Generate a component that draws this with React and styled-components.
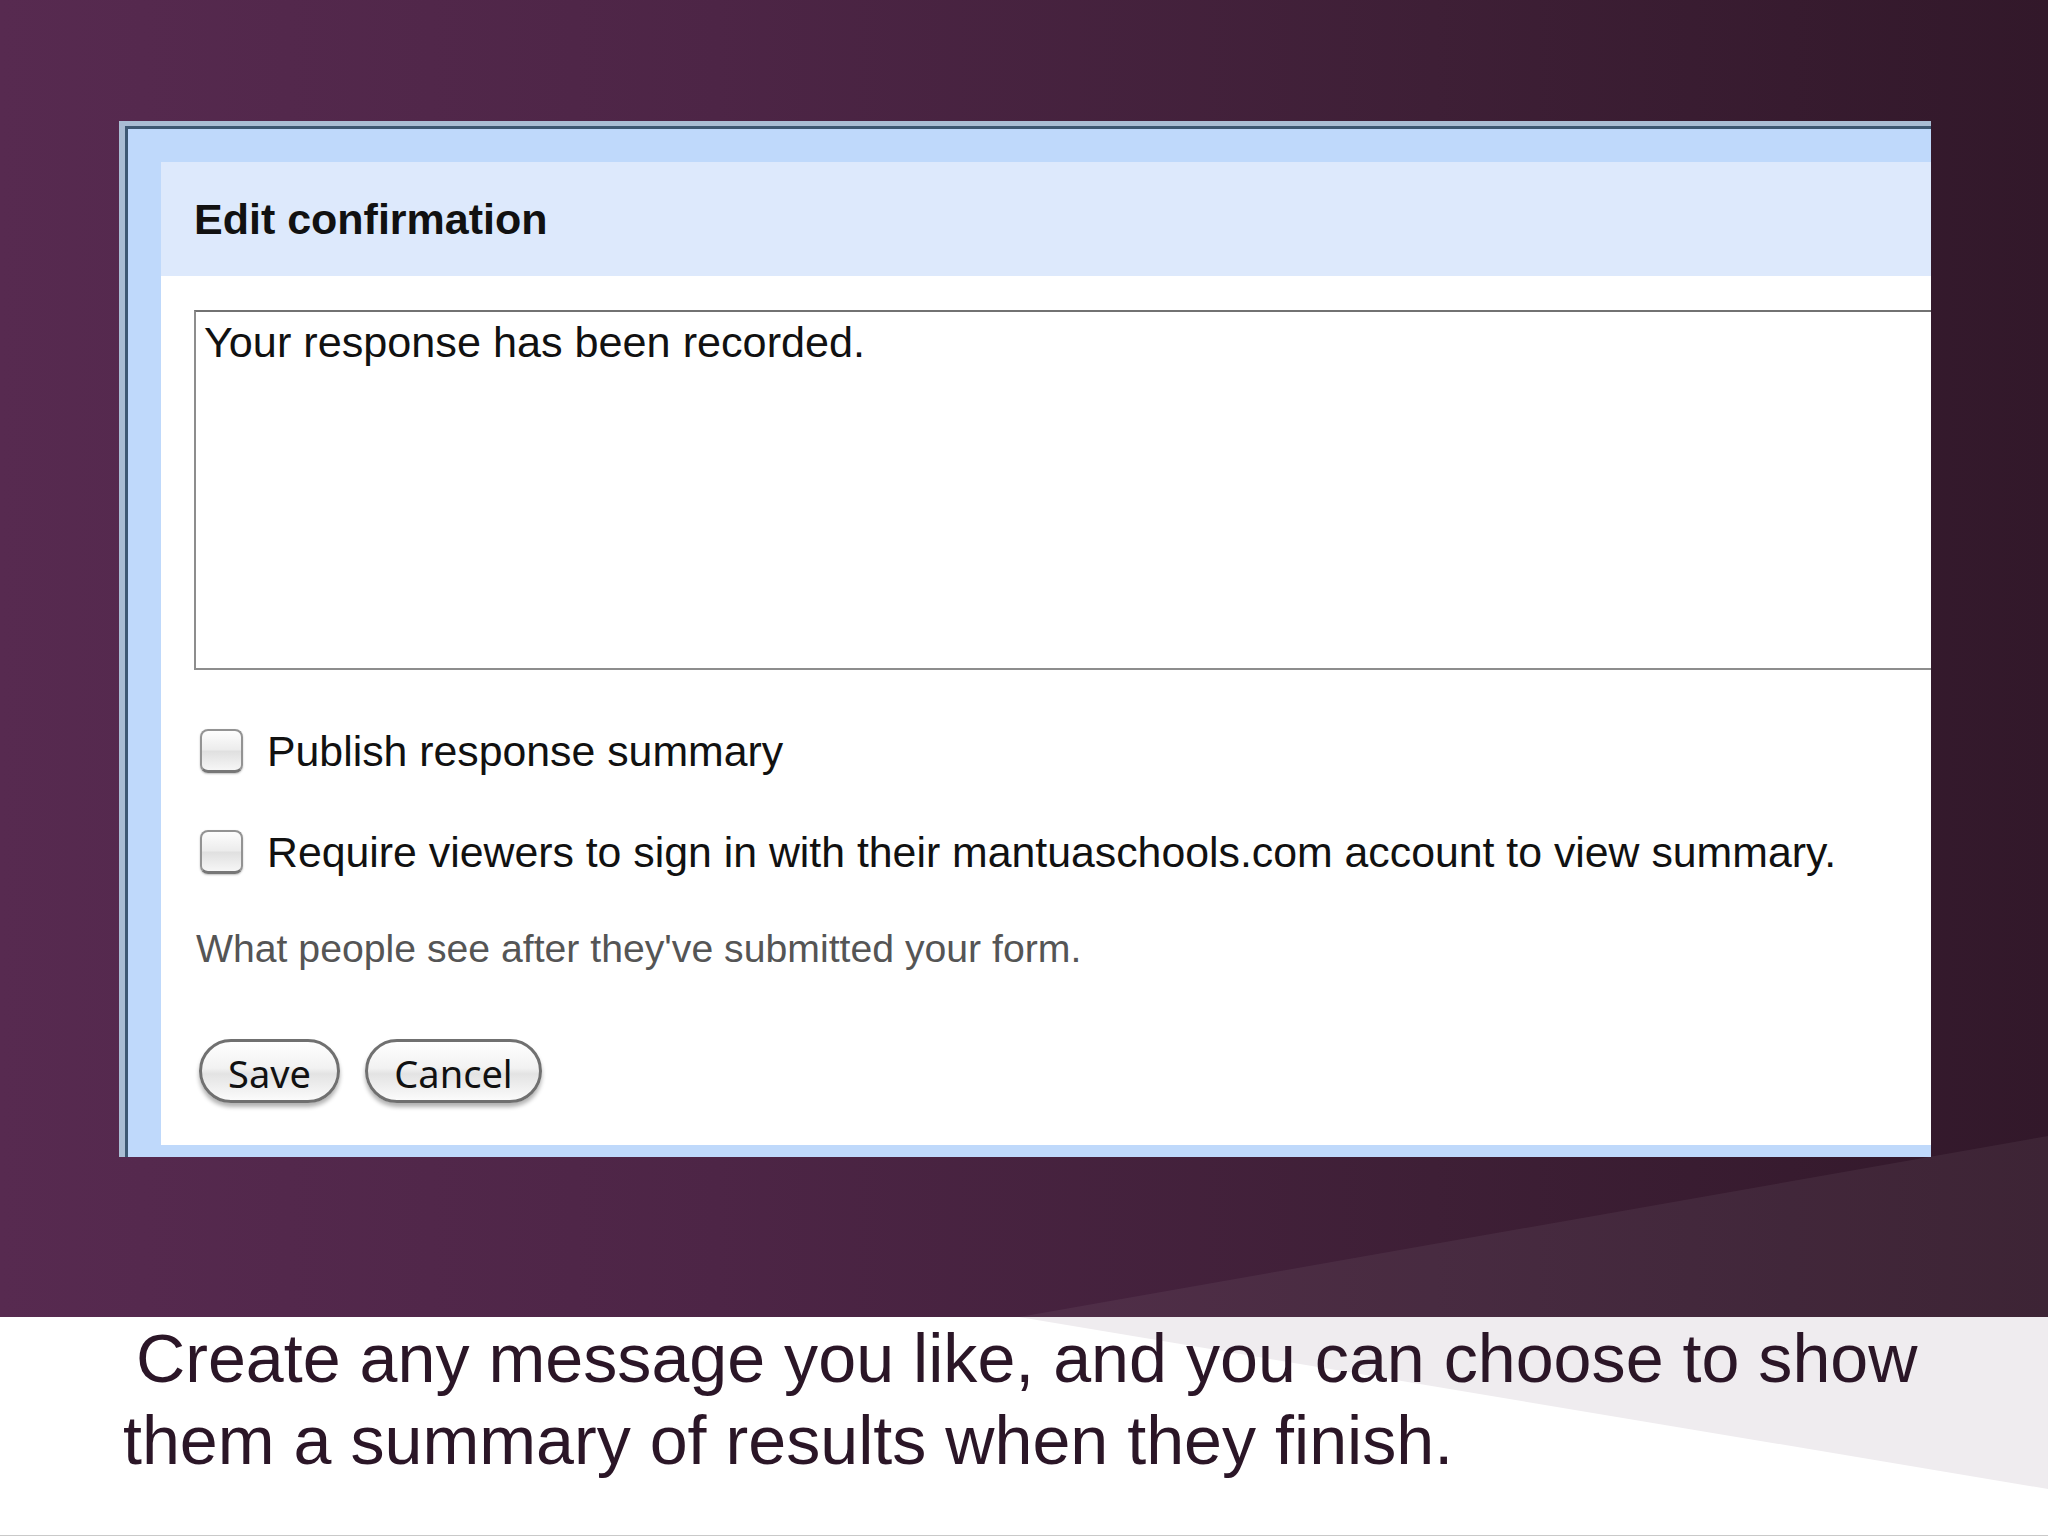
import React from "react";
import styled, { createGlobalStyle } from "styled-components";

const GlobalStyle = createGlobalStyle`
  html, body {
    margin: 0;
    padding: 0;
  }
  body {
    width: 2048px;
    height: 1536px;
    overflow: hidden;
    font-family: "Liberation Sans", Arial, sans-serif;
  }
`;

const Slide = styled.div`
  width: 2048px;
  height: 1536px;
  display: flex;
  flex-direction: column;
  overflow: hidden;
`;

const Stage = styled.section`
  position: relative;
  height: 1317px;
  flex-shrink: 0;
  box-sizing: border-box;
  padding: 121px 0 0 119px;
  background: linear-gradient(
    90deg,
    #572a50 0%,
    #4d2546 35%,
    #3e1f36 70%,
    #32182a 100%
  );

  /* lighter wedge bottom right */
  &::after {
    content: "";
    position: absolute;
    inset: 0;
    background: rgba(255, 255, 255, 0.055);
    clip-path: polygon(1019px 1317px, 2048px 1136px, 2048px 1317px);
  }
`;

const Dialog = styled.div`
  position: relative;
  z-index: 1;
  width: 1812px;
  height: 1036px;
  box-sizing: border-box;
  display: flex;
  border-top: 5px solid #a9bdd3;
  border-left: 6px solid #a9bdd3;
`;

const DialogFrame = styled.div`
  flex: 1;
  display: flex;
  flex-direction: column;
  border-top: 3px solid #3d5872;
  border-left: 3px solid #3d5872;
  background: #bfd9fb;
  padding: 33px 0 12px 33px;
`;

const Panel = styled.div`
  flex: 1;
  display: flex;
  flex-direction: column;
  background: #fff;
  overflow: hidden;
`;

const PanelHeader = styled.div`
  height: 114px;
  flex-shrink: 0;
  display: flex;
  align-items: center;
  padding-left: 33px;
  background: #dde9fc;
  color: #111;
  font-size: 43px;
  font-weight: 700;
`;

const PanelBody = styled.div`
  display: flex;
  flex-direction: column;
  padding: 34px 0 0 33px;
`;

const MessageBox = styled.div`
  height: 360px;
  box-sizing: border-box;
  border: 2px solid #8d8d8d;
  border-top-color: #727272;
  border-right: none;
  padding: 6px 0 0 8px;
  color: #111;
  font-size: 43.2px;
`;

const Options = styled.div`
  display: flex;
  flex-direction: column;
  gap: 57px;
  margin-top: 59px;
`;

const OptionRow = styled.label`
  display: flex;
  align-items: center;
  gap: 24px;
  height: 44px;
  margin-left: 6px;
`;

const Checkbox = styled.span`
  width: 43px;
  height: 44px;
  box-sizing: border-box;
  border-radius: 8px;
  border: 2px solid #939393;
  border-bottom: 3px solid #777;
  background: linear-gradient(
    180deg,
    #fdfdfd 0%,
    #ececec 48%,
    #e0e0e0 52%,
    #f6f6f6 100%
  );
  box-shadow: 0 1px 2px rgba(0, 0, 0, 0.25);
`;

const OptionLabel = styled.span`
  color: #111;
  font-size: 42.8px;
  line-height: 1;
  white-space: nowrap;
`;

const Hint = styled.p`
  margin: 53px 0 0 2px;
  color: #555;
  font-size: 39.2px;
`;

const Actions = styled.div`
  display: flex;
  gap: 25px;
  margin: 68px 0 0 5px;
`;

const Button = styled.button`
  width: ${(p) => p.$w}px;
  height: 64px;
  box-sizing: border-box;
  padding: 3px 0 0;
  border: 3px solid #707070;
  border-radius: 32px;
  background: linear-gradient(
    180deg,
    #ffffff 0%,
    #f2f2f2 45%,
    #e3e3e3 55%,
    #fbfbfb 100%
  );
  box-shadow: 0 4px 4px rgba(0, 0, 0, 0.3);
  color: #111;
  font-family: "Noto Sans", "DejaVu Sans", sans-serif;
  font-size: 38px;
  cursor: pointer;
`;

const CaptionArea = styled.section`
  position: relative;
  flex: 1;
  background: #fff;
  border-bottom: 1px solid #c9c9c9;

  /* grey wedge under the stage */
  &::before {
    content: "";
    position: absolute;
    inset: 0;
    background: #efecef;
    clip-path: polygon(1019px 0, 2048px 0, 2048px 172px);
  }
`;

const Caption = styled.p`
  position: relative;
  width: 1840px;
  margin: 0;
  padding-left: 123px;
  text-indent: 13px;
  color: #2b1627;
  font-size: 68.2px;
  line-height: 82px;
`;

export default function App() {
  return (
    <>
      <GlobalStyle />
      <Slide>
        <Stage>
          <Dialog>
            <DialogFrame>
              <Panel>
                <PanelHeader>Edit confirmation</PanelHeader>
                <PanelBody>
                  <MessageBox>Your response has been recorded.</MessageBox>
                  <Options>
                    <OptionRow>
                      <Checkbox />
                      <OptionLabel>Publish response summary</OptionLabel>
                    </OptionRow>
                    <OptionRow>
                      <Checkbox />
                      <OptionLabel>
                        Require viewers to sign in with their mantuaschools.com
                        account to view summary.
                      </OptionLabel>
                    </OptionRow>
                  </Options>
                  <Hint>What people see after they've submitted your form.</Hint>
                  <Actions>
                    <Button $w={141}>Save</Button>
                    <Button $w={177}>Cancel</Button>
                  </Actions>
                </PanelBody>
              </Panel>
            </DialogFrame>
          </Dialog>
        </Stage>
        <CaptionArea>
          <Caption>
            Create any message you like, and you can choose to show them a
            summary of results when they finish.
          </Caption>
        </CaptionArea>
      </Slide>
    </>
  );
}
